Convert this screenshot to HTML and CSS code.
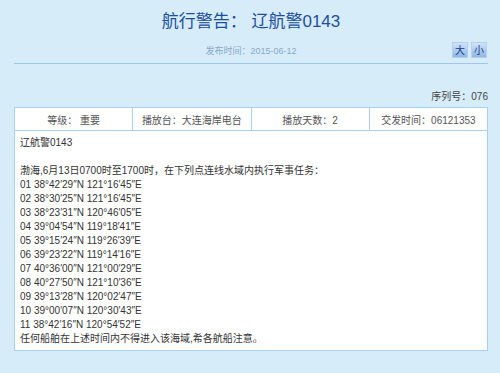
FILE: index.html
```html
<!DOCTYPE html>
<html lang="zh">
<head>
    <meta charset="UTF-8">
    <meta name="viewport" content="width=device-width, initial-scale=1.0">
    <title>航行警告</title>
    <link rel="stylesheet" href="styles.css">
</head>
<body>
    <div class="page">
        <h1 class="title">航行警告： 辽航警0143</h1>
        <div class="meta">
            <span></span>
            <span class="date">发布时间：2015-06-12</span>
            <div class="size-btns">
                <button class="size-btn">大</button>
                <button class="size-btn">小</button>
            </div>
        </div>

        <div class="serial">序列号：076</div>

        <table class="notice">
            <tr class="info">
                <td>等级： 重要</td>
                <td>播放台：大连海岸电台</td>
                <td>播放天数：2</td>
                <td>交发时间：06121353</td>
            </tr>
            <tr>
                <td colspan="4" class="body">
                    辽航警0143<br>
                    <br>
                    渤海,6月13日0700时至1700时，在下列点连线水域内执行军事任务：<br>
                    01 38°42′29″N 121°16′45″E<br>
                    02 38°30′25″N 121°16′45″E<br>
                    03 38°23′31″N 120°46′05″E<br>
                    04 39°04′54″N 119°18′41″E<br>
                    05 39°15′24″N 119°26′39″E<br>
                    06 39°23′22″N 119°14′16″E<br>
                    07 40°36′00″N 121°00′29″E<br>
                    08 40°27′50″N 121°10′36″E<br>
                    09 39°13′28″N 120°02′47″E<br>
                    10 39°00′07″N 120°30′43″E<br>
                    11 38°42′16″N 120°54′52″E<br>
                    任何船舶在上述时间内不得进入该海域,希各航船注意。
                </td>
            </tr>
        </table>
    </div>
</body>
</html>
```

FILE: styles.css
```css
body {
    margin: 0;
    background-color: #d6ecf9;
    font-family: 'Liberation Sans', 'Noto Sans CJK SC', sans-serif;
    color: #333;
}
.page {
    padding: 0 12px 0 14px;
}
.title {
    margin: 0;
    padding-top: 10px;
    text-align: center;
    font-size: 17px;
    line-height: 24px;
    font-weight: normal;
    color: #1c4f9f;
}
.meta {
    display: grid;
    grid-template-columns: 1fr auto 1fr;
    align-items: center;
    margin-top: 7px;
    height: 18px;
    padding-bottom: 4px;
    border-bottom: 1px solid #9ec6ef;
}
.date {
    font-size: 9px;
    color: #8aa8c8;
}
.size-btns {
    display: flex;
    justify-content: flex-end;
    gap: 3px;
    padding-right: 1px;
}
.size-btn {
    width: 16px;
    height: 16px;
    padding: 0;
    border: 1px solid #b4d0ee;
    background: linear-gradient(#cfe3f8, #8fb6e6);
    color: #173e80;
    font-family: 'Noto Sans CJK SC', sans-serif;
    font-size: 10px;
    line-height: 14px;
}
.serial {
    margin-top: 26px;
    text-align: right;
    font-size: 10px;
    line-height: 14px;
    color: #444;
}
.notice {
    width: 100%;
    margin-top: 3px;
    border-collapse: collapse;
    background-color: #fff;
    font-size: 10px;
}
.notice td {
    border: 1px solid #a9d0ef;
}
.info td {
    width: 25%;
    height: 22px;
    padding: 0;
    text-align: center;
    color: #555;
}
.body {
    padding: 5px 6px 4px 5px;
    line-height: 14px;
    color: #333;
}
```
